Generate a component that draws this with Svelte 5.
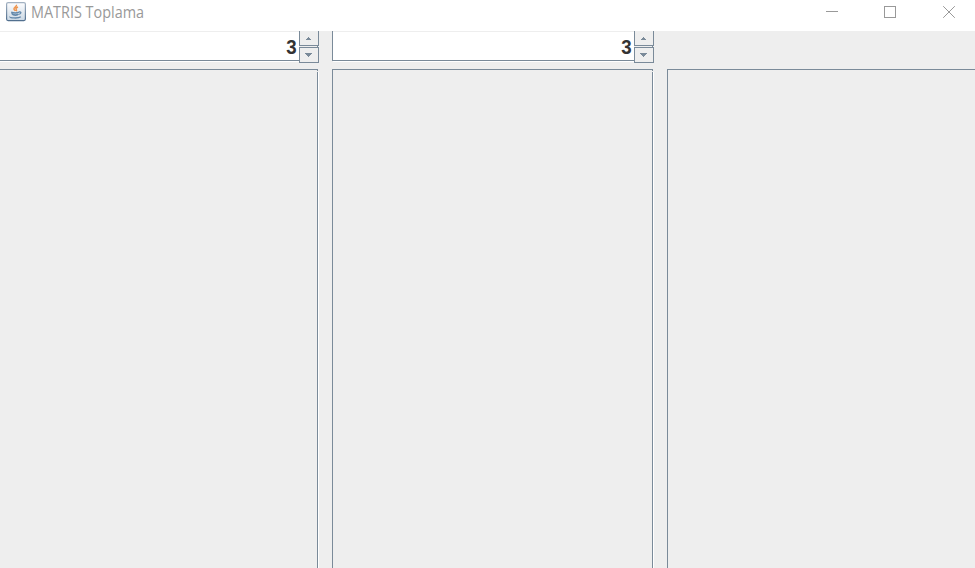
<script>
  const spinners = [{ value: 3 }, { value: 3 }];
  const panels = ['first', 'second', 'result'];
</script>

<div class="window">
  <header>
    <svg class="java" width="20" height="20" viewBox="0 0 20 20">
      <defs>
        <linearGradient id="tile" x1="0" y1="0" x2="0" y2="1">
          <stop offset="0" stop-color="#fdfdfe" />
          <stop offset="1" stop-color="#cbd8e4" />
        </linearGradient>
        <linearGradient id="edge" x1="0" y1="0" x2="0" y2="1">
          <stop offset="0" stop-color="#a3b2c2" />
          <stop offset="1" stop-color="#516f8e" />
        </linearGradient>
      </defs>
      <rect x=".6" y=".6" width="18.8" height="18" rx="1.5" fill="url(#tile)" stroke="url(#edge)" stroke-width="1.2" />
      <path d="M10.4 2.8c.8 2-3 2.6-2.4 4.3.2.8 1 1.2 1.2 1.9M12 5c-2 .8-2.5 1.7-1.7 2.6.4.5.2 1.1-.3 1.5" fill="none" stroke="#ee954f" stroke-width="1.5" />
      <path d="M5.2 10.2c2 .8 6 .8 7.8 0M5.8 10.6c.1 1.2.8 2.1 1.4 2.3 1.3.4 3.3.4 4.5 0M6.7 12.3c1.5.6 3.8.6 5.5 0M13 10c2.9-.5 2.3 2.1-.6 2.4M4 14.6c-1.1 1.6 8.6 2 10.8.2" fill="none" stroke="#6388aa" stroke-width="1.3" />
    </svg>
    <span class="title">MATRIS Toplama</span>
    <div class="controls">
      <svg width="12" height="12" viewBox="0 0 12 12" shape-rendering="crispEdges"><path d="M0 5.5h12" /></svg>
      <svg width="12" height="12" viewBox="0 0 12 12" shape-rendering="crispEdges"><path d="M.5.5h11v11H.5z" /></svg>
      <svg width="12" height="12" viewBox="0 0 12 12"><path d="M.2.2l11.6 11.6M11.8.2L.2 11.8" /></svg>
    </div>
  </header>

  <main>
    <div class="row spinners">
      {#each spinners as spinner}
        <div class="spinner">
          <div class="field"><span>{spinner.value}</span></div>
          <div class="buttons">
            <button class="up" aria-label="Increase">
              <svg width="5" height="3" viewBox="0 0 5 3" shape-rendering="crispEdges"><path d="M2 0h1v1h1v1h1v1H0V2h1V1h1z" /></svg>
            </button>
            <button class="down" aria-label="Decrease">
              <svg width="7" height="4" viewBox="0 0 7 4" shape-rendering="crispEdges"><path d="M0 0h7v1H6v1H5v1H4v1H3V3H2V2H1V1H0z" /></svg>
            </button>
          </div>
        </div>
      {/each}
    </div>
    <div class="row panels">
      {#each panels as name (name)}
        <section class="panel" aria-label={name}></section>
      {/each}
    </div>
  </main>
</div>

<style>
  :global(body) { margin: 0; overflow: hidden; }
  .window {
    width: 975px;
    height: 568px;
    overflow: hidden;
    display: flex;
    flex-direction: column;
    background: #eee;
  }
  header {
    height: 31px;
    flex: none;
    display: flex;
    align-items: flex-start;
    background: #fff;
  }
  .java { margin: 2px 0 0 6px; flex: none; }
  .title {
    margin: 2px 0 0 5px;
    font: 15.5px/20px "Open Sans", "Noto Sans", sans-serif;
    color: #999;
    white-space: nowrap;
    transform-origin: 0 50%;
    transform: scaleX(.93);
  }
  .controls {
    margin: 6px 20px 0 auto;
    display: flex;
    gap: 46px;
  }
  .controls svg { fill: none; stroke: #999; stroke-width: 1; }
  .controls svg:last-child { margin-left: 1px; }
  main { flex: 1; display: flex; flex-direction: column; min-height: 0; }
  .row { display: flex; gap: 13px; margin-left: -3px; }
  .spinners { height: 32px; flex: none; }
  .spinner { width: 322px; display: flex; flex: none; }
  .field {
    flex: 1;
    height: 29px;
    box-sizing: content-box;
    padding-right: 2px;
    background: linear-gradient(#eee, #eee) 0 0 / 100% 1px no-repeat #fff;
    border-left: 1px solid #7a8a99;
    border-bottom: 1px solid #7a8a99;
    box-shadow: 1px 1px #fff;
    text-align: right;
    font: bold 21px/32px "Liberation Sans", Arial, sans-serif;
    color: #333;
  }
  .field span {
    display: inline-block;
    transform: scaleX(.89);
    transform-origin: 100% 50%;
  }
  .buttons {
    width: 20px;
    display: flex;
    flex-direction: column;
    gap: 1px;
    background: linear-gradient(#7a8a99, #7a8a99) 18px 15px / 1px 1px no-repeat #eee;
  }
  button {
    box-sizing: border-box;
    width: 20px;
    padding: 0 0 0 6px;
    margin: 0;
    border: 1px solid #7a8a99;
    background: #eee;
    display: flex;
    align-items: flex-start;
  }
  button path { fill: #7a8a99; }
  .up { height: 15px; border-top: 0; padding-top: 6px; }
  .down { height: 16px; padding: 5px 0 0 5px; }
  .panels { margin-top: 6px; flex: 1; }
  .panel {
    position: relative;
    box-sizing: border-box;
    width: 321px;
    margin-right: 1px;
    flex: none;
    border: 1px solid #7a8a99;
    border-bottom: 0;
    box-shadow: 1px 3px #fff;
  }
  /* notch in the corner of the etched border */
  .panel::after {
    content: "";
    position: absolute;
    top: 1px;
    right: -1px;
    width: 1px;
    height: 1px;
    background: #eee;
  }
</style>
